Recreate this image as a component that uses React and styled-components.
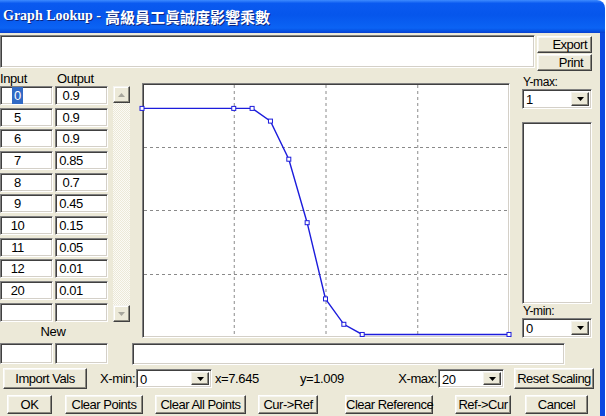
import { Fragment } from "react";
import styled, { createGlobalStyle } from "styled-components";

const GlobalStyle = createGlobalStyle`
  html, body { margin: 0; padding: 0; background: #fff; }
  body {
    font-family: "Liberation Sans", Arial, sans-serif;
    font-size: 13px;
    letter-spacing: -0.4px;
    color: #000;
  }
  * { box-sizing: border-box; }
`;

const inputs = [
  ["0", "0.9"],
  ["5", "0.9"],
  ["6", "0.9"],
  ["7", "0.85"],
  ["8", "0.7"],
  ["9", "0.45"],
  ["10", "0.15"],
  ["11", "0.05"],
  ["12", "0.01"],
  ["20", "0.01"],
  ["", ""],
];

const sunken = `
  background: #fff;
  border-style: solid;
  border-width: 1px;
  border-color: #808080 #fff #fff #808080;
  box-shadow: inset 1px 1px 0 #404040, inset -1px -1px 0 #d4d0c8;
`;

const Window = styled.div`
  width: 605px;
  height: 416px;
  display: flex;
  flex-direction: column;
  overflow: hidden;
`;

const TitleBar = styled.div`
  height: 33px;
  flex: none;
  display: flex;
  align-items: center;
  padding: 0 0 1px 3px;
  border-top-right-radius: 8px;
  background: linear-gradient(
    180deg,
    #3d8bff 0%,
    #0a5af0 10%,
    #0656ec 45%,
    #0b63f4 85%,
    #0550e2 94%,
    #0a3fcf 100%
  );
  color: #fff;
  font: bold 14px "Liberation Serif", "Noto Sans CJK TC", serif;
  letter-spacing: 0;
  text-shadow: 1px 1px 0 #0c2580;
  white-space: nowrap;

  span {
    font: bold 15px "Noto Sans CJK TC", sans-serif;
    margin-left: 4px;
  }
`;

const Body = styled.div`
  flex: 1;
  background: #ece9d8;
  border-right: 5px solid #0b48e0;
  padding-top: 2px;
  display: flex;
  flex-direction: column;
`;

const TopRow = styled.div`
  display: flex;
  height: 35px;
`;

const Memo = styled.div`
  ${sunken}
  width: 535px;
  height: 33px;
`;

const SideButtons = styled.div`
  display: flex;
  flex-direction: column;
  gap: 1px;
  margin-left: 2px;
  padding-top: 1px;
`;

const Button = styled.button`
  width: ${(p) => p.$w}px;
  height: ${(p) => p.$h || 19}px;
  margin-left: ${(p) => p.$ml || 0}px;
  flex: none;
  padding: 0;
  font: inherit;
  letter-spacing: -0.5px;
  white-space: nowrap;
  color: #000;
  background: #ece9d8;
  border: 1px solid;
  border-color: #fff #404040 #404040 #fff;
  box-shadow: inset -1px -1px 0 #8c8a7f, inset 1px 1px 0 #f7f6f1;
  text-align: ${(p) => p.$align || "center"};
  padding-right: ${(p) => p.$pr || 0}px;
  line-height: 1;
`;

const Workspace = styled.div`
  display: flex;
  align-items: flex-start;
  height: 295px;
`;

const LeftCol = styled.div`
  width: 108px;
  display: flex;
  flex-direction: column;
`;

const HeadRow = styled.div`
  display: grid;
  grid-template-columns: 55px 53px;
  height: 16px;
  line-height: 16px;
  padding-top: 1px;

  div:last-child {
    padding-left: 2px;
  }
`;

const Table = styled.div`
  display: grid;
  grid-template-columns: 53px 53px;
  column-gap: 2px;
  grid-auto-rows: 19px;
  row-gap: 2.667px;
`;

const Cell = styled.div`
  ${sunken}
  height: ${(p) => p.$h || 19}px;
  line-height: ${(p) => (p.$h || 19) - 2}px;
  text-align: center;
  padding-right: ${(p) => (p.$out ? 21 : 18)}px;
  white-space: nowrap;
`;

const Selected = styled.span`
  background: #316ac5;
  color: #fff;
  padding: 1px 2px;
`;

const NewLabel = styled.div`
  height: 16px;
  line-height: 16px;
  margin-top: 2px;
  text-align: center;
  padding-right: 2px;
`;

const NewRow = styled.div`
  display: grid;
  grid-template-columns: 53px 53px;
  column-gap: 2px;
  margin-top: 3px;
`;

const RightArea = styled.div`
  display: flex;
  flex-direction: column;
  margin-left: 5px;
`;

const ChartRow = styled.div`
  display: flex;
  align-items: flex-start;
  height: 268px;
`;

const Scrollbar = styled.div`
  width: 17px;
  height: 236px;
  margin-top: 16px;
  display: flex;
  flex-direction: column;
  justify-content: space-between;
  background: repeating-conic-gradient(#ece9d8 0 25%, #fbfaf6 0 50%) 0 0 / 2px 2px;
`;

const ScrollBtn = styled.div`
  width: 17px;
  height: 17px;
  display: flex;
  align-items: center;
  justify-content: center;
  background: #ece9d8;
  border: 1px solid;
  border-color: #f4f3ee #404040 #404040 #f4f3ee;
  box-shadow: inset -1px -1px 0 #8c8a7f, inset 1px 1px 0 #fff;
`;

const Chart = styled.div`
  ${sunken}
  position: relative;
  width: 368px;
  height: 255px;
  margin: 13px 0 0 12px;

  svg {
    position: absolute;
    left: -1px;
    top: -1px;
    overflow: visible;
  }
`;

const Side = styled.div`
  width: 70px;
  margin: 5px 0 0 12px;
  display: flex;
  flex-direction: column;
`;

const SmallLabel = styled.div`
  height: 14px;
  line-height: 14px;
  font-size: 12px;
  padding-left: 1px;
`;

const Combo = styled.div`
  ${sunken}
  width: ${(p) => p.$w}px;
  height: ${(p) => p.$h || 20}px;
  flex: none;
  display: flex;
  align-items: stretch;
  justify-content: space-between;
  padding: 2px;
  line-height: ${(p) => (p.$h || 20) - 4}px;

  span {
    padding-left: 1px;
  }
`;

const DropBtn = styled.div`
  width: 18px;
  display: flex;
  align-items: center;
  justify-content: center;
  background: #ece9d8;
  border: 1px solid;
  border-color: #f4f3ee #404040 #404040 #f4f3ee;
  box-shadow: inset -1px -1px 0 #8c8a7f;
`;

const ListBox = styled.div`
  ${sunken}
  height: 182px;
  margin: 13px 0 0;
`;

const TextField = styled.div`
  ${sunken}
  width: 433px;
  height: 22px;
  margin: 5px 0 0 19px;
`;

const ControlRow = styled.div`
  display: flex;
  align-items: center;
  height: ${(p) => p.$h}px;
  margin-top: ${(p) => p.$mt}px;
`;

const Text = styled.div`
  width: ${(p) => p.$w}px;
  margin-left: ${(p) => p.$ml || 0}px;
  flex: none;
  text-align: ${(p) => p.$align || "left"};
  padding-right: ${(p) => p.$pr || 0}px;
  white-space: nowrap;
`;

const Arrow = ({ up, color = "#000" }) => (
  <svg width="7" height="4" viewBox="0 0 7 4">
    <polygon points={up ? "0,4 7,4 3.5,0" : "0,0 7,0 3.5,4"} fill={color} />
  </svg>
);

const DropCombo = ({ value, w, h }) => (
  <Combo $w={w} $h={h}>
    <span>{value}</span>
    <DropBtn>
      <Arrow />
    </DropBtn>
  </Combo>
);

const points = [
  [0, 0.9],
  [5, 0.9],
  [6, 0.9],
  [7, 0.85],
  [8, 0.7],
  [9, 0.45],
  [10, 0.15],
  [11, 0.05],
  [12, 0.01],
  [20, 0.01],
];

const px = (x) => (x / 20) * 367;
const py = (y) => 254 - y * 254;

const Graph = () => (
  <svg width="368" height="255" viewBox="0 0 368 255">
    <g stroke="#8a8a8a" strokeWidth="1" strokeDasharray="3 3">
      {[1, 2, 3].map((i) => (
        <line key={"v" + i} x1={px(i * 5) + 0.5} y1="2" x2={px(i * 5) + 0.5} y2="253" />
      ))}
      {[0.25, 0.5, 0.75].map((v) => (
        <line key={"h" + v} x1="2" y1={Math.round(py(v)) + 0.5} x2="366" y2={Math.round(py(v)) + 0.5} />
      ))}
    </g>
    <polyline
      points={points.map(([x, y]) => `${px(x)},${py(y)}`).join(" ")}
      fill="none"
      stroke="#1c1cdc"
      strokeWidth="1.4"
    />
    <g fill="#fff" stroke="#1c1cdc" strokeWidth="1">
      {points.map(([x, y]) => (
        <rect key={x} x={px(x) - 2} y={py(y) - 2} width="4" height="4" />
      ))}
    </g>
  </svg>
);

export default function App() {
  return (
    <Window>
      <GlobalStyle />
      <TitleBar>
        Graph Lookup -<span>高級員工眞誠度影響乘數</span>
      </TitleBar>
      <Body>
        <TopRow>
          <Memo />
          <SideButtons>
            <Button $w={55} $h={17} $align="right" $pr={4}>Export</Button>
            <Button $w={55} $h={17} $align="right" $pr={8}>Print</Button>
          </SideButtons>
        </TopRow>

        <Workspace>
          <LeftCol>
            <HeadRow>
              <div>Input</div>
              <div>Output</div>
            </HeadRow>
            <Table>
              {inputs.map(([i, o], n) => (
                <Fragment key={n}>
                  <Cell>{n === 0 ? <Selected>{i}</Selected> : i}</Cell>
                  <Cell $out>{o}</Cell>
                </Fragment>
              ))}
            </Table>
            <NewLabel>New</NewLabel>
            <NewRow>
              <Cell $h={21} />
              <Cell $h={21} $out />
            </NewRow>
          </LeftCol>

          <RightArea>
            <ChartRow>
              <Scrollbar>
                <ScrollBtn>
                  <Arrow up color="#a7a69c" />
                </ScrollBtn>
                <ScrollBtn>
                  <Arrow color="#a7a69c" />
                </ScrollBtn>
              </Scrollbar>
              <Chart>
                <Graph />
              </Chart>
              <Side>
                <SmallLabel>Y-max:</SmallLabel>
                <DropCombo value="1" w={70} />
                <ListBox />
                <SmallLabel>Y-min:</SmallLabel>
                <DropCombo value="0" w={70} />
              </Side>
            </ChartRow>
            <TextField />
          </RightArea>
        </Workspace>

        <ControlRow $h={21} $mt={3}>
          <Button $w={84} $h={21} $ml={3}>Import Vals</Button>
          <Text $w={36} $ml={13} $align="right" $pr={1}>X-min:</Text>
          <DropCombo value="0" w={76} h={19} />
          <Text $w={85} $ml={3}>x=7.645</Text>
          <Text $w={98}>y=1.009</Text>
          <Text $w={40} $align="right" $pr={1}>X-max:</Text>
          <DropCombo value="20" w={66} h={19} />
          <Button $w={80} $h={21} $ml={10}>Reset Scaling</Button>
        </ControlRow>

        <ControlRow $h={19} $mt={6}>
          <Button $w={45} $ml={7}>OK</Button>
          <Button $w={78} $ml={13}>Clear Points</Button>
          <Button $w={91} $ml={12}>Clear All Points</Button>
          <Button $w={60} $ml={12}>Cur-&gt;Ref</Button>
          <Button $w={88} $ml={27}>Clear Reference</Button>
          <Button $w={56} $ml={22}>Ref-&gt;Cur</Button>
          <Button $w={63} $ml={14}>Cancel</Button>
        </ControlRow>
      </Body>
    </Window>
  );
}
